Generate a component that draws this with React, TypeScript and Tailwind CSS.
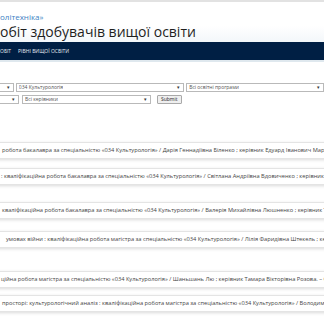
const results = [
  {
    text: "робота бакалавра за спеціальністю «034 Культурологія» / Дарія Геннадіївна Біленко ; керівник Едуард Іванович Мартинюк",
    cls: "mt-0 pl-[2px]",
  },
  {
    text: ": кваліфікаційна робота бакалавра за спеціальністю «034 Культурологія» / Світлана Андріївна Вдовиченко ; керівник Едуард Іванович Мартинюк",
    cls: "mt-[9px] pl-[1px]",
  },
  {
    text: "кваліфікаційна робота бакалавра за спеціальністю «034 Культурологія» / Валерія Михайлівна Люшненко ; керівник Тамара Вікторівна Розова",
    cls: "mt-[17px] pl-[2px]",
  },
  {
    text: "умовах війни : кваліфікаційна робота магістра за спеціальністю «034 Культурологія» / Лілія Фаридівна Штекель ; керівник Едуард Іванович Мартинюк",
    cls: "mt-[12px] pl-[6px]",
  },
  {
    text: "ційна робота магістра за спеціальністю «034 Культурологія» / Шаньшань Лю ; керівник Тамара Вікторівна Розова. – Одеса, 2024",
    cls: "mt-[23px] pl-[1px]",
  },
  {
    text: "просторі: культурологічний аналіз : кваліфікаційна робота магістра за спеціальністю «034 Культурологія» / Володимир Петрович",
    cls: "mt-[7px] pl-[2px]",
  },
];

const Select = ({ label, className }: { label: string; className: string }) => (
  <div
    className={`flex h-[9px] items-center justify-between border border-[#b9b9b9] bg-white pl-[2px] pr-[3px] ${className}`}
  >
    <span className="truncate text-[5px] leading-none text-[#555]">{label}</span>
    <span className="text-[5px] leading-none text-[#333]">▾</span>
  </div>
);

export default function App() {
  return (
    <div
      className="h-[323px] w-[324px] overflow-hidden bg-white"
      style={{ fontFamily: '"Open Sans", "Liberation Sans", sans-serif' }}
    >
      <div className="h-[2px] bg-[#e2e2e2]" />
      <header className="flex h-[40px] flex-col bg-gradient-to-b from-white from-60% to-[#f3f7fa]">
        <p className="mt-[9px] text-[8px] leading-[12px] text-[#3d7fc4]">олітехніка»</p>
        <h1 className="text-[14px] leading-[18px] text-[#1f1f1f]">обіт здобувачів вищої освіти</h1>
      </header>
      <nav className="flex h-[18px] items-center gap-[7px] bg-[#001f44] text-[5px] uppercase leading-none text-[#e8ecf2]">
        <span>обіт</span>
        <span>рівні вищої освіти</span>
      </nav>
      <div className="h-[2px] bg-[#dfe8ee]" />

      <form className="mt-[21px] flex flex-col gap-[3px]">
        <div className="flex gap-[2px]">
          <Select label="" className="w-[16px] -ml-[2px]" />
          <Select label="034 Культурологія" className="w-[171px]" />
          <Select label="Всі освітні програми" className="w-[140px]" />
        </div>
        <div className="flex items-center gap-[3px]">
          <Select label="" className="w-[21px] -ml-[2px]" />
          <Select label="Всі керівники" className="w-[129px]" />
          <button
            type="button"
            className="ml-[3px] h-[9px] rounded-[1px] border border-[#a9a9a9] bg-[#efefef] px-[3px] text-[5px] leading-none text-[#222]"
          >
            Submit
          </button>
        </div>
      </form>

      <div className="mt-[38px] flex flex-col">
        {results.map((r, i) => (
          <div
            key={i}
            className={`-mx-[4px] flex h-[17px] items-center overflow-hidden border-y border-[#e4e4e4] bg-white shadow-[0_1px_3px_rgba(0,0,0,0.15)] ${r.cls}`}
          >
            <span className="whitespace-nowrap pl-[4px] text-[5.7px] leading-none text-[#444]">
              {r.text}
            </span>
          </div>
        ))}
      </div>
    </div>
  );
}
